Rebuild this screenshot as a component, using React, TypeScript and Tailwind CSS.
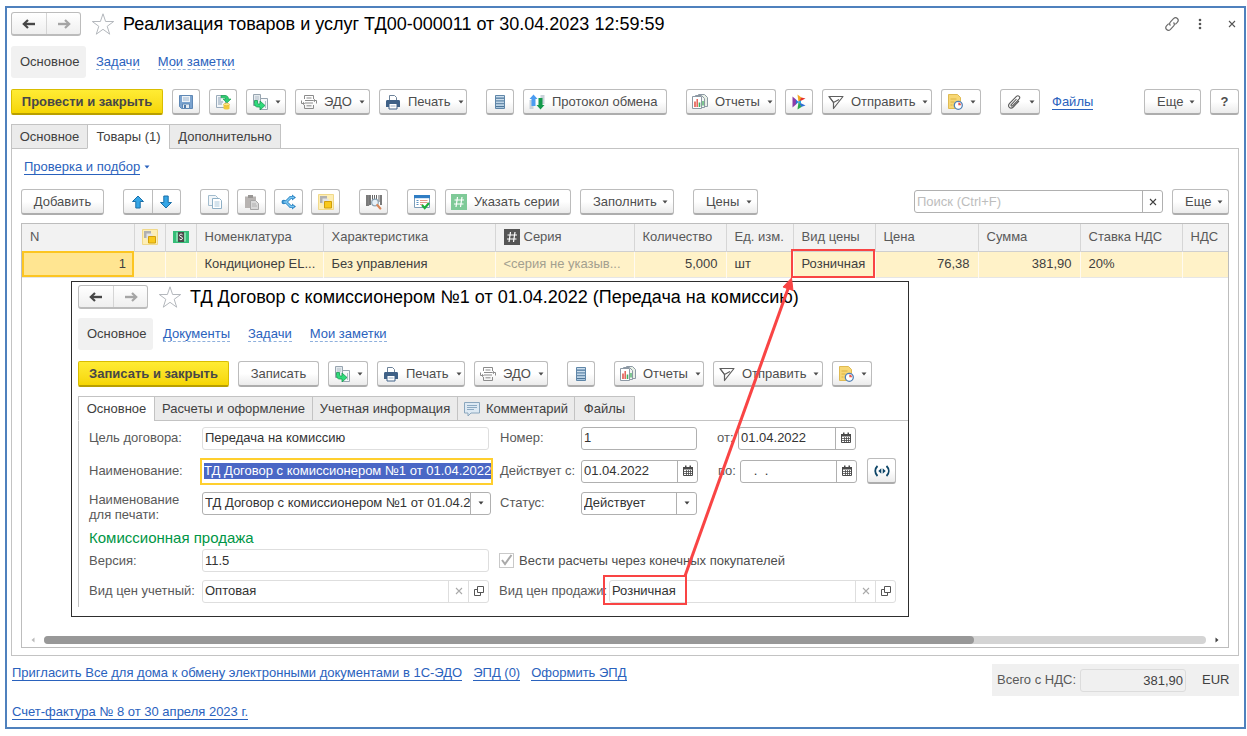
import React from 'react';
import clsx from 'clsx';

type IconProps = { className?: string };

function Svg({ className, children }: { className?: string; children: React.ReactNode }) {
  return (
    <svg viewBox="0 0 16 16" fill="none" className={clsx('w-4 h-4 shrink-0', className)} aria-hidden="true">
      {children}
    </svg>
  );
}

const ArrowIcon = ({ className }: IconProps) => (
  <Svg className={className}>
    <path d="M3.5 8h10.5" stroke="currentColor" strokeWidth="2.4" />
    <path d="M7 4 2.8 8 7 12" stroke="currentColor" strokeWidth="2.2" />
  </Svg>
);

const StarIcon = () => (
  <svg viewBox="0 0 24 24" fill="none" className="w-6 h-6 shrink-0" aria-hidden="true">
    <path
      d="m12 1.8 2.6 7.7h8.1l-6.5 4.8 2.5 7.9-6.7-4.9-6.7 4.9 2.5-7.9L1.3 9.5h8.1z"
      stroke="#b4b8bd"
      strokeWidth="1"
    />
  </svg>
);

const SaveIcon = () => (
  <Svg>
    <path d="M1.5 1.5h13v13h-11l-2-2z" fill="#7ba3cf" stroke="#5f88b5" />
    <path d="M4 2h8v6H4z" fill="#eef3f8" />
    <path d="M5 4h6M5 6h6" stroke="#9db5cf" />
    <path d="M4.500 10h7v4.500h-7z" fill="#e6ecf2" stroke="#5f88b5" />
    <path d="M6 11h2v3H6z" fill="#4f79a8" />
  </Svg>
);

const PostIcon = () => (
  <Svg>
    <path d="M1.5 1.5h9v12h-9z" fill="#f3f6f9" stroke="#9aabbb" />
    <path d="M3 4h3M3 6h3M3 8h5M3 10h4" stroke="#8aa0b5" />
    <path
      d="M6 1.500h4c2.500 0 3.500 1.500 3.500 3.500H16l-4 4-4-4h2.500C10.500 4 10 3.800 9 3.800H6z"
      fill="#2ecc71"
      stroke="#159a4c"
      strokeWidth=".6"
    />
    <path d="M8.500 10.500v4c0 1.300 6 1.300 6 0v-4z" fill="#f3c93c" />
    <ellipse cx="11.5" cy="10.500" rx="3" ry="1.2" fill="#ffe68a" stroke="#d9a91c" strokeWidth=".5" />
  </Svg>
);

const BasedOnIcon = () => (
  <Svg>
    <path d="M1.5.5h7v11h-7z" fill="#e4eaee" stroke="#98a5b0" />
    <path d="M8.500 4.500h7v11h-7z" fill="#f6f8fa" stroke="#98a5b0" />
    <path d="M3 3h4M3 5h4M13.500 7v7" stroke="#b3bec9" />
    <path
      d="M2.500 6.500h3v2.500c0 .6.4 1 1 1H8V7l5 4.500-5 4.500v-3H6c-2.300 0-3.500-1.200-3.500-3.500z"
      fill="#2fdb7b"
      stroke="#169b50"
      strokeWidth=".8"
    />
  </Svg>
);

const EdoIcon = () => (
  <Svg>
    <path d="M3.500 5V1.500h9V5M3.500 11v3.500h9V11M5.500 4h5M4 6.500h8M4 9h8M5.500 11.800h5" stroke="#8b8b8b" />
    <path d="M.5 6.500v3h2M15.500 9.500v-3h-2" stroke="#8b8b8b" />
    <path d="m2 7.800 2 1.700-2 1.700zM14 4.800l-2 1.700 2 1.700z" fill="#8b8b8b" />
  </Svg>
);

const PrinterIcon = () => (
  <Svg>
    <path d="M4.500 6V1.500h5l2 2V6" fill="#fff" stroke="#6d8299" />
    <path d="M1 7.500C1 6.500 1.500 6 2.500 6h11c1 0 1.500.5 1.500 1.500V13H1z" fill="#3f6187" />
    <path d="M4 9.500h8v5.500H4z" fill="#fff" stroke="#3f6187" />
    <path d="M5.500 12h5" stroke="#9db1c6" />
  </Svg>
);

const StackIcon = () => (
  <Svg>
    <path d="M3.500 1.500h9v13h-9z" fill="#a9c6de" stroke="#5f86a8" />
    <path d="M4 4.200h8M4 7h8M4 9.800h8M4 12.500h8" stroke="#4f7698" />
    <path d="M4 2.500h8M4 5.500h8M4 8.200h8M4 11h8" stroke="#d5e5f1" strokeWidth=".8" />
  </Svg>
);

const ExchangeIcon = () => (
  <Svg>
    <path d="M.5 6h4v9h-4zM11.500 1h4v9h-4z" fill="#c9d2da" />
    <path d="M4.500.5 8.500 5h-2v7h-4V5h-2z" fill="#4c9cf0" />
    <path d="M11.500 15.500 7.500 11h2V4h4v7h2z" fill="#159a4c" />
  </Svg>
);

const ReportIcon = () => (
  <Svg>
    <path d="M6.500.5h6l3 3v9h-9z" fill="#e8f0e6" stroke="#8d99a4" />
    <path d="M3.500 1.500h6l3 3v9h-9z" fill="#f3f6f3" stroke="#8d99a4" />
    <path d="M.5 2.500h9v12h-9z" fill="#fff" stroke="#8d99a4" />
    <path d="M3 13V7.500" stroke="#e2574c" strokeWidth="1.600" />
    <path d="M5.200 13V5" stroke="#e2574c" strokeWidth="1.400" />
    <path d="M7.500 13V8.500" stroke="#3fae5d" strokeWidth="1.600" />
    <path d="M11 11.500V7" stroke="#3fae5d" strokeWidth="1.300" />
  </Svg>
);

const BusinessIcon = () => (
  <Svg>
    <path d="m1.500 2.500 3.500 3v5l-3.500 3z" fill="#8a3ea8" />
    <path d="m5 5.500 2.500 2.500L5 10.500z" fill="#2d6fd2" />
    <path d="m6.500.5 4.500 3.500-3.500 4z" fill="#f5a623" />
    <path d="m7.500 8 3-4.500 4 1z" fill="#e5342b" />
    <path d="m7.500 8 7 3.500-4.500 1.500z" fill="#2d6fd2" />
    <path d="m7.500 8 3 5-4 2.500z" fill="#2aa84a" />
    <path d="m6 8 4-1.500v3z" fill="#27a9e0" />
  </Svg>
);

const SendIcon = () => (
  <Svg>
    <path d="M1 2.500h14L5.500 14.500v-6zM5.500 8.500l5.500-3" stroke="#5f5f5f" strokeWidth="1.200" strokeLinejoin="round" />
    <path d="M1 2.500 5.500 8.500" stroke="#5f5f5f" strokeWidth="1.200" />
  </Svg>
);

const NoteIcon = () => (
  <Svg>
    <path d="M1.500.5h9l3 3v11h-12z" fill="#f7d774" stroke="#dfba52" />
    <path d="M3.500 5h6M3.500 8h4M3.500 11h2" stroke="#dcb445" />
    <circle cx="11.300" cy="11.300" r="4" fill="#fff" stroke="#4f7fb5" strokeWidth="1.300" />
    <path d="M11.300 8.500v2.800H14a2.800 2.800 0 0 0-2.700-2.800z" fill="#e5574c" />
  </Svg>
);

const ClipIcon = () => (
  <Svg>
    <path
      d="m10.500 5-5.200 5.600c-.8.9.3 2 1.200 1.200L13 5.200c2-2.200-.7-4.700-2.800-2.600L3.600 9.400c-2.700 3 .8 6.300 3.700 3.600L13 7"
      stroke="#5c5c5c"
      strokeWidth="1.100"
    />
  </Svg>
);

const UpIcon = ({ className }: IconProps) => (
  <Svg className={className}>
    <path d="m8 2 5.500 5.500h-3.300V14H5.800V7.500H2.500z" fill="#35a6e6" stroke="#1b6fa8" strokeLinejoin="round" />
  </Svg>
);

const CopyIcon = () => (
  <Svg>
    <path d="M1.500 1.500h7l2 2v8h-9z" fill="#f2f6f9" stroke="#a3bccd" />
    <path d="M5.500 4.500h7l2 2v8h-9z" fill="#fff" stroke="#8fb0c6" />
    <path d="M7.500 8h5M7.500 10h5M7.500 12h5" stroke="#a9c7da" />
  </Svg>
);

const PasteIcon = () => (
  <Svg>
    <path d="M1 2.500h3V1h5v1.500h3V14H1z" fill="#b8b4b2" />
    <path d="M4 1h5v3H4z" fill="#999694" />
    <path d="M6.500 6.500h5l3 3v6h-8z" fill="#d8d8d8" stroke="#a6a6a6" />
    <path d="M8 10h4M8 12h5" stroke="#b0b0b0" />
  </Svg>
);

const SplitIcon = () => (
  <Svg>
    <path d="M2 8h3M5 8l4.500-4.500H12M5 8l4.500 4.500H12" stroke="#2f86c4" strokeWidth="3" />
    <path d="m11 .5 4 3-4 3zM11 9.500l4 3-4 3z" fill="#2f86c4" />
    <circle cx="2.800" cy="8" r="2.300" fill="#2f86c4" />
    <path d="M2.500 8H5l4.500-4.500H13M5 8l4.500 4.500H13" stroke="#7cc8f2" strokeWidth="1.400" />
  </Svg>
);

const OrderIcon = () => (
  <Svg>
    <path d="M.5.5h15v15H.5z" fill="#fdeeb5" stroke="#f1d98a" />
    <path d="M2 2h7v7H2z" fill="#b0b0b0" />
    <path d="M4.500 4.500h6v6h-6z" fill="#e4e4e4" />
    <path d="M6.500 7.500h7v6.500h-7z" fill="#f9c91c" stroke="#d09f0b" />
  </Svg>
);

const BarcodeIcon = () => (
  <Svg>
    <path d="M1 1v11M4 1v10M15 1v10" stroke="#444" strokeWidth="1.400" />
    <path d="M2.700 1v11M6.500 1v6M8.500 1v5M10.500 1v5M13 1v7" stroke="#666" strokeWidth="1" />
    <circle cx="9" cy="8.500" r="3.300" fill="#e7f1f8" stroke="#8fa5b5" strokeWidth="1.200" />
    <path d="m11.300 11 3 3.500" stroke="#d9885a" strokeWidth="2.200" strokeLinecap="round" />
  </Svg>
);

const CheckListIcon = () => (
  <Svg>
    <path d="M.5 1.500h15v12H.5z" fill="#fff" stroke="#7d9db8" />
    <path d="M0 1h16v3.200H0z" fill="#2f7dc4" />
    <path d="M2.500 6.500h2M2.500 8.500h2M2.500 10.500h2" stroke="#5a90bf" />
    <path d="M6 6.500h7.500M6 8.500h7.500M6 10.500h3" stroke="#e79b8c" />
    <path d="m8 11 2.700 3L15 9" stroke="#1fae3b" strokeWidth="2.200" />
  </Svg>
);

const HashIcon = ({ className }: IconProps) => (
  <Svg className={className}>
    <path d="M0 0h16v16H0z" fill="currentColor" />
    <path d="M6.500 3 5 13M11 3 9.500 13M3.500 6H13M3 10h9.500" stroke="#fff" strokeWidth="1.200" />
  </Svg>
);

const TraceIcon = () => (
  <Svg>
    <path d="M0 2h16v12H0z" fill="#35bd78" />
    <path d="M3 3.500h10v9H3z" fill="#7fdcaa" />
    <path d="M5 3h6v10H5z" fill="#4a4a4a" />
    <path d="M9.500 5.800C9 4.800 6.500 4.800 6.500 6.500s3 1 3 2.700-2.500 1.800-3 .8" stroke="#fff" strokeWidth="1" />
  </Svg>
);

const CommentIcon = () => (
  <Svg>
    <path d="M.5 1.500h15V12H7l-3 3v-3H.5z" fill="#dde9f3" stroke="#8aa6bd" />
    <path d="M3 4.500h10M3 6.500h10M3 8.500h7" stroke="#8ba9c2" />
  </Svg>
);

const CalendarIcon = () => (
  <svg viewBox="0 0 12 12" fill="none" className="w-3 h-3" aria-hidden="true">
    <path d="M1.500 2.500h9v8h-9z" fill="#fff" stroke="#4a4a4a" />
    <path d="M1 2h10v2.500H1zM3 .5h1.500V3H3zM7.500.5H9V3H7.500z" fill="#4a4a4a" />
    <path d="M2 6.500h8M2 8.500h8M4.500 5v5.500M6.500 5v5.500M8.500 5v5.500" stroke="#4a4a4a" strokeWidth=".8" />
  </svg>
);

const OpenIcon = () => (
  <svg viewBox="0 0 12 12" fill="none" className="w-3 h-3" aria-hidden="true">
    <path d="M4.500 1.500h6v6h-6z" stroke="#555" />
    <path d="M4.500 4.500h-3v6h6v-3" stroke="#555" />
  </svg>
);

const CrossIcon = ({ className }: IconProps) => (
  <svg viewBox="0 0 8 8" fill="none" className={clsx('w-2 h-2', className)} aria-hidden="true">
    <path d="m1 1 6 6M7 1 1 7" stroke="currentColor" strokeWidth="1.100" />
  </svg>
);

const LinkIcon = () => (
  <Svg>
    <path
      d="M6.500 9.500c-1.300-1.300-1-2.700 0-3.700l3-3.100c2.700-2.700 6.300.9 3.800 3.600l-2 2M9.500 6.500c1.300 1.300 1 2.700 0 3.700l-3 3.100c-2.700 2.700-6.300-.9-3.800-3.600l2-2"
      stroke="#6a6a6a"
      strokeWidth="1.200"
    />
  </Svg>
);

const PeriodIcon = () => (
  <Svg>
    <path d="M3.500 3c-3 3-3 7 0 10M12.500 3c3 3 3 7 0 10" stroke="#0d4567" strokeWidth="1.800" />
    <path d="M7.300 5.300v5.400L4.300 8zM8.700 5.300v5.400l3-2.700z" fill="#0d4567" />
  </Svg>
);

const Caret = ({ className }: IconProps) => (
  <svg viewBox="0 0 6 4" className={clsx('w-[6px] h-1 shrink-0', className)} aria-hidden="true">
    <path d="M.5.5h5L3 3.500z" fill="currentColor" />
  </svg>
);

const buttonBase =
  'h-[26px] rounded-[3px] border border-b-2 border-[#bcbcbc] border-b-[#adadad] bg-linear-to-b from-white via-white to-[#ebebeb] text-[#4d4d4d] whitespace-nowrap';

interface ToolButtonProps {
  width: string;
  icon?: React.ReactNode;
  text?: string;
  label?: string;
  caret?: boolean;
  disabled?: boolean;
}

function ToolButton({ width, icon, text, label, caret, disabled }: ToolButtonProps) {
  const centered = !caret && !(icon && text);
  return (
    <button
      type="button"
      aria-label={label}
      disabled={disabled}
      className={clsx(
        buttonBase,
        'flex items-center shrink-0',
        width,
        centered && 'justify-center',
        !centered && (icon ? 'pl-[5px] pr-[5px] gap-[7px]' : 'pl-3 pr-[5px]')
      )}
    >
      {icon}
      {text && <span>{text}</span>}
      {caret && <Caret className="ml-auto" />}
    </button>
  );
}

function PrimaryButton({ text, width }: { text: string; width: string }) {
  return (
    <button
      type="button"
      className={clsx(
        'h-[26px] shrink-0 rounded-[2px] border border-b-2 border-[#d9bd00] border-b-[#b99f00] bg-linear-to-b from-[#ffec33] to-[#f6d600] font-bold text-[#474747] whitespace-nowrap',
        width
      )}
    >
      {text}
    </button>
  );
}

function WindowHeader({ title, children }: { title: string; children?: React.ReactNode }) {
  return (
    <div className="flex items-center h-6">
      <div className="flex h-6 rounded-[3px] border border-b-2 border-[#bcbcbc] bg-linear-to-b from-white to-[#efefef]">
        <button type="button" aria-label="Назад" className="w-[34px] flex items-center justify-center text-[#474747]">
          <ArrowIcon />
        </button>
        <button
          type="button"
          aria-label="Вперед"
          className="w-[34px] flex items-center justify-center border-l border-[#d5d5d5] text-[#a5a5a5]"
        >
          <ArrowIcon className="rotate-180" />
        </button>
      </div>
      <button type="button" aria-label="В избранное" className="ml-[10px] mr-2">
        <StarIcon />
      </button>
      <h1 className="text-[18px] leading-6 text-black whitespace-nowrap">{title}</h1>
      {children}
    </div>
  );
}

function SectionNav({ links }: { links: string[] }) {
  return (
    <nav className="flex items-center h-8">
      <a href="#main" className="h-8 w-[75px] pl-[9px] flex items-center rounded-[3px] bg-[#f1f1f1]">
        Основное
      </a>
      {links.map((link, i) => (
        <a
          key={link}
          href="#section"
          className={clsx(
            'leading-[14px] border-b border-dashed border-[#8fb0dd] text-[#2a62bd]',
            i === 0 ? 'ml-[10px]' : 'ml-[18px]'
          )}
        >
          {link}
        </a>
      ))}
    </nav>
  );
}

interface TabItem {
  text: string;
  width: string;
  icon?: React.ReactNode;
}

function Tabs({ items, active }: { items: TabItem[]; active: string }) {
  return (
    <div role="tablist" className="flex h-[25px] -mb-px relative">
      {items.map((item, i) => (
        <button
          key={item.text}
          type="button"
          role="tab"
          aria-selected={item.text === active}
          className={clsx(
            'flex items-center justify-center gap-[6px] border border-[#c3c3c3] whitespace-nowrap',
            item.width,
            i > 0 && '-ml-px',
            item.text === active ? 'bg-white border-b-white' : 'bg-[#ebebeb]'
          )}
        >
          {item.icon}
          {item.text}
        </button>
      ))}
    </div>
  );
}

interface FieldProps {
  id: string;
  value: string;
  width: string;
  muted?: boolean;
  buttons?: { label: string; icon: React.ReactNode }[];
}

function Field({ id, value, width, muted, buttons = [] }: FieldProps) {
  const border = muted ? 'border-[#dedede]' : 'border-[#b0b0b0]';
  return (
    <div className={clsx('flex h-[23px] shrink-0 rounded-[3px] border bg-white', border, width)}>
      <input id={id} defaultValue={value} className="flex-1 min-w-0 pl-[2px] text-[#333] outline-none" />
      {buttons.map((b) => (
        <button
          key={b.label}
          type="button"
          aria-label={b.label}
          className={clsx('w-5 flex items-center justify-center border-l', border)}
        >
          {b.icon}
        </button>
      ))}
    </div>
  );
}

function Label({ htmlFor, width, children }: { htmlFor: string; width: string; children: React.ReactNode }) {
  return (
    <label htmlFor={htmlFor} className={clsx('shrink-0 text-[#595959] whitespace-nowrap', width)}>
      {children}
    </label>
  );
}

const calendarButton = { label: 'Выбрать дату', icon: <CalendarIcon /> };
const listButton = { label: 'Выбрать из списка', icon: <Caret /> };
const clearButton = { label: 'Очистить', icon: <CrossIcon className="text-[#aaa]" /> };
const openButton = { label: 'Открыть', icon: <OpenIcon /> };

function ContractForm() {
  return (
    <form className="pl-[10px] border-l border-[#c3c3c3]">
      <div className="flex items-center h-[34px]">
        <Label htmlFor="purpose" width="w-[113px]">Цель договора:</Label>
        <Field id="purpose" value="Передача на комиссию" width="w-[287px]" muted />
        <Label htmlFor="number" width="w-[92px] pl-[11px]">Номер:</Label>
        <Field id="number" value="1" width="w-[116px]" />
        <Label htmlFor="date" width="w-[41px] pl-5">от:</Label>
        <Field id="date" value="01.04.2022" width="w-[118px]" buttons={[calendarButton]} />
      </div>
      <div className="flex items-center h-8">
        <Label htmlFor="name" width="w-[111px]">Наименование:</Label>
        <div className="w-[293px] h-[27px] shrink-0 border-2 border-[#ffcf2e] flex items-center pl-[2px]">
          <input
            id="name"
            defaultValue="ТД Договор с комиссионером №1 от 01.04.2022"
            className="w-full h-4 bg-[#4a67c5] text-white outline-none"
          />
        </div>
        <Label htmlFor="validFrom" width="w-[88px] pl-[7px]">Действует с:</Label>
        <Field id="validFrom" value="01.04.2022" width="w-[117px]" buttons={[calendarButton]} />
        <Label htmlFor="validTo" width="w-[42px] pl-5">по:</Label>
        <Field id="validTo" value="   .  ." width="w-[117px]" buttons={[calendarButton]} />
        <button
          type="button"
          aria-label="Изменить период"
          className={clsx(buttonBase, 'ml-[10px] w-[29px] flex items-center justify-center')}
        >
          <PeriodIcon />
        </button>
      </div>
      <div className="flex items-center h-8">
        <Label htmlFor="printName" width="w-[113px] leading-[15px] pt-2">
          Наименование
          <br />
          для печати:
        </Label>
        <Field
          id="printName"
          value="ТД Договор с комиссионером №1 от 01.04.2022"
          width="w-[289px]"
          buttons={[listButton]}
        />
        <Label htmlFor="status" width="w-[90px] pl-[9px]">Статус:</Label>
        <div className="relative w-[116px]">
          <select
            id="status"
            defaultValue="Действует"
            className="w-full h-[23px] px-[2px] appearance-none rounded-[3px] border border-[#b0b0b0] bg-white text-[#333] outline-none"
          >
            <option>Действует</option>
            <option>Закрыт</option>
          </select>
          <span className="absolute right-0 inset-y-0 w-[21px] flex items-center justify-center border-l border-[#b0b0b0] pointer-events-none">
            <Caret />
          </span>
        </div>
      </div>
      <h2 className="h-[27px] flex items-end leading-4 text-[15px] text-[#009646]">Комиссионная продажа</h2>
      <div className="flex items-center h-[29px]">
        <Label htmlFor="version" width="w-[113px]">Версия:</Label>
        <Field id="version" value="11.5" width="w-[287px]" muted />
        <label className="relative flex items-center ml-[10px] gap-[5px] text-[#4d4d4d]">
          <input
            type="checkbox"
            defaultChecked
            className="peer appearance-none w-[15px] h-[15px] border border-[#c9c9c9] bg-white"
          />
          <svg
            viewBox="0 0 15 15"
            fill="none"
            className="absolute left-0 w-[15px] h-[15px] hidden peer-checked:block"
            aria-hidden="true"
          >
            <path d="m3 7 3 4 6.500-9" stroke="#a9a9a9" strokeWidth="2" />
          </svg>
          Вести расчеты через конечных покупателей
        </label>
      </div>
      <div className="flex items-center h-8">
        <Label htmlFor="accountPrice" width="w-[113px]">Вид цен учетный:</Label>
        <Field
          id="accountPrice"
          value="Оптовая"
          width="w-[287px]"
          muted
          buttons={[clearButton, openButton]}
        />
        <Label htmlFor="salePrice" width="w-[120px] pl-[10px]">Вид цен продажи:</Label>
        <Field
          id="salePrice"
          value="Розничная"
          width="w-[287px]"
          muted
          buttons={[clearButton, openButton]}
        />
      </div>
    </form>
  );
}

function ContractWindow() {
  return (
    <section className="absolute left-[49px] top-[57px] w-[838px] pl-[6px] pt-[3px] pb-[9px] border border-[#2e2e2e] bg-white">
      <WindowHeader title="ТД Договор с комиссионером №1 от 01.04.2022 (Передача на комиссию)" />
      <div className="mt-[9px]">
        <SectionNav links={['Документы', 'Задачи', 'Мои заметки']} />
      </div>
      <div className="flex gap-[19px] mt-[11px]">
        <div className="flex gap-[9px]">
          <PrimaryButton text="Записать и закрыть" width="w-[151px]" />
          <ToolButton width="w-[81px]" text="Записать" />
          <ToolButton width="w-10" icon={<BasedOnIcon />} label="Создать на основании" caret />
          <ToolButton width="w-[88px]" icon={<PrinterIcon />} text="Печать" caret />
          <ToolButton width="w-[74px]" icon={<EdoIcon />} text="ЭДО" caret />
        </div>
        <ToolButton width="w-7" icon={<StackIcon />} label="Реестр" />
        <div className="flex gap-[9px]">
          <ToolButton width="w-[90px]" icon={<ReportIcon />} text="Отчеты" caret />
          <ToolButton width="w-[110px]" icon={<SendIcon />} text="Отправить" caret />
          <ToolButton width="w-10" icon={<NoteIcon />} label="Напоминания" caret />
        </div>
      </div>
      <div className="mt-[9px]">
        <Tabs
          active="Основное"
          items={[
            { text: 'Основное', width: 'w-[77px]' },
            { text: 'Расчеты и оформление', width: 'w-[159px]' },
            { text: 'Учетная информация', width: 'w-[146px]' },
            { text: 'Комментарий', width: 'w-[118px]', icon: <CommentIcon /> },
            { text: 'Файлы', width: 'w-[61px]' },
          ]}
        />
      </div>
      <div className="border-t border-[#c3c3c3]">
        <ContractForm />
      </div>
    </section>
  );
}

const columns: { title: React.ReactNode; key: string; width: string }[] = [
  { key: 'n', title: 'N', width: 'w-[112px]' },
  { key: 'order', title: <OrderIcon />, width: 'w-[31px]' },
  { key: 'trace', title: <TraceIcon />, width: 'w-[31px]' },
  { key: 'item', title: 'Номенклатура', width: 'w-[127px]' },
  { key: 'kind', title: 'Характеристика', width: 'w-[172px]' },
  {
    key: 'series',
    title: (
      <span className="flex items-center gap-1">
        <HashIcon className="text-[#555]" />
        Серия
      </span>
    ),
    width: 'w-[139px]',
  },
  { key: 'qty', title: 'Количество', width: 'w-[92px]' },
  { key: 'unit', title: 'Ед. изм.', width: 'w-[67px]' },
  { key: 'priceKind', title: 'Вид цены', width: 'w-[82px]' },
  { key: 'price', title: 'Цена', width: 'w-[103px]' },
  { key: 'sum', title: 'Сумма', width: 'w-[102px]' },
  { key: 'vatRate', title: 'Ставка НДС', width: 'w-[102px]' },
  { key: 'vat', title: 'НДС', width: '' },
];

function GoodsTable() {
  const cell = 'pl-2 pr-1 border-r border-[#fffaf0] whitespace-nowrap';
  const numberCell = 'pl-1 pr-2 border-r border-[#fffaf0] whitespace-nowrap text-right';
  return (
    <table className="w-full table-fixed text-left">
      <thead>
        <tr className="h-[27px] bg-[#f2f2f2] border-b border-[#cfcfcf]">
          {columns.map((c) => (
            <th
              key={c.key}
              scope="col"
              className={clsx(
                'font-normal text-[#595959] border-r border-[#d6d6d6] last:border-r-0 whitespace-nowrap',
                c.width,
                c.key === 'order' || c.key === 'trace' ? 'px-[7px]' : 'px-2'
              )}
            >
              {c.title}
            </th>
          ))}
        </tr>
      </thead>
      <tbody>
        <tr className="h-[26px] bg-[#fff2c8] border-b border-[#e6e6e6] text-[#404040]">
          <td className="px-2 text-right bg-[#ffe591] outline-2 -outline-offset-2 outline-[#fcc521]">1</td>
          <td className={cell} />
          <td className={cell} />
          <td className={cell}>Кондиционер EL...</td>
          <td className={cell}>Без управления</td>
          <td className={clsx(cell, 'text-[#a3a08f]')}>&lt;серия не указыв...</td>
          <td className={numberCell}>5,000</td>
          <td className={cell}>шт</td>
          <td className={cell}>Розничная</td>
          <td className={numberCell}>76,38</td>
          <td className={numberCell}>381,90</td>
          <td className={cell}>20%</td>
          <td />
        </tr>
      </tbody>
    </table>
  );
}

// Red frames and the arrow that ties the two price kinds together
function Callout() {
  return (
    <svg
      viewBox="0 0 900 400"
      fill="none"
      stroke="#f94444"
      className="absolute left-0 top-0 w-[900px] h-[400px] pointer-events-none"
      aria-hidden="true"
    >
      <path d="M770 26h82v27h-82zM582 352h82v28h-82z" strokeWidth="2" />
      <path d="m663 352 104-290" strokeWidth="3" />
      <path d="m769.500 54-8.500 9 10 3.500z" fill="#f94444" strokeWidth="1" />
    </svg>
  );
}

function GoodsPanel() {
  return (
    <div className="flex-1 flex flex-col px-[9px] pb-[7px] border border-[#c3c3c3]">
      <div className="h-9 mb-1 pl-[3px] flex items-center gap-1 text-[#2a62bd]">
        <a href="#selection" className="leading-[14px] border-b border-[#2a62bd]">
          Проверка и подбор
        </a>
        <Caret />
      </div>
      <div className="flex gap-[19px]">
        <ToolButton width="w-[83px]" text="Добавить" />
        <div className={clsx(buttonBase, 'flex w-[58px]')}>
          <button type="button" aria-label="Переместить вверх" className="flex-1 flex items-center justify-center">
            <UpIcon />
          </button>
          <button
            type="button"
            aria-label="Переместить вниз"
            className="flex-1 flex items-center justify-center border-l border-[#bcbcbc]"
          >
            <UpIcon className="rotate-180" />
          </button>
        </div>
        <div className="flex gap-2">
          <ToolButton width="w-[29px]" icon={<CopyIcon />} label="Копировать" />
          <ToolButton width="w-[29px]" icon={<PasteIcon />} label="Вставить" disabled />
          <ToolButton width="w-[29px]" icon={<SplitIcon />} label="Разбить строку" />
          <ToolButton width="w-[29px]" icon={<OrderIcon />} label="Заказ" />
        </div>
        <ToolButton width="w-[29px]" icon={<BarcodeIcon />} label="Поиск по штрихкоду" />
        <div className="flex gap-[9px]">
          <ToolButton width="w-[29px]" icon={<CheckListIcon />} label="Проверить" />
          <ToolButton width="w-[126px]" icon={<HashIcon className="text-[#7fca98]" />} text="Указать серии" />
          <ToolButton width="w-[94px]" text="Заполнить" caret />
        </div>
        <ToolButton width="w-[65px]" text="Цены" caret />
        <div className="flex gap-[9px] ml-auto">
          <div className="flex w-[249px] h-[23px] mt-px rounded-[3px] border border-[#b0b0b0]">
            <input
              aria-label="Поиск"
              placeholder="Поиск (Ctrl+F)"
              className="flex-1 min-w-0 px-[2px] outline-none placeholder:text-[#bdbdbd]"
            />
            <button
              type="button"
              aria-label="Очистить поиск"
              className="w-5 flex items-center justify-center border-l border-[#b0b0b0]"
            >
              <CrossIcon />
            </button>
          </div>
          <ToolButton width="w-[57px]" text="Еще" caret />
        </div>
      </div>
      <div className="relative flex-1 flex flex-col justify-between min-h-[425px] mt-2 border border-[#bdbdbd]">
        <GoodsTable />
        <div className="flex items-center h-[15px] gap-2 px-2">
          <Caret className="rotate-90 text-[#bbb]" />
          <div className="flex-1 h-2 rounded-full bg-[#d4d4d4]">
            <div className="w-4/5 h-2 rounded-full bg-[#989898]" />
          </div>
          <Caret className="-rotate-90" />
        </div>
        <ContractWindow />
        <Callout />
      </div>
    </div>
  );
}

function Footer() {
  const link = 'leading-[14px] border-b border-[#2a62bd] text-[#2a62bd]';
  return (
    <footer className="flex items-start justify-between pt-2 pb-[7px]">
      <div className="pl-px">
        <div className="flex items-center gap-[11px] h-[18px]">
          <a href="#invite" className={link}>
            Пригласить Все для дома к обмену электронными документами в 1С-ЭДО
          </a>
          <a href="#epd" className={link}>ЭПД (0)</a>
          <a href="#new-epd" className={link}>Оформить ЭПД</a>
        </div>
        <div className="flex items-center h-4 mt-[22px]">
          <a href="#invoice" className={link}>Счет-фактура № 8 от 30 апреля 2023 г.</a>
        </div>
      </div>
      <div className="flex items-center h-8 px-[5px] bg-[#f0f0f0]">
        <label htmlFor="total" className="w-[83px] text-[#595959] whitespace-nowrap">Всего с НДС:</label>
        <input
          id="total"
          readOnly
          value="381,90"
          className="w-[106px] h-[23px] px-[2px] text-right rounded-[3px] border border-[#dcdcdc] text-[#404040] outline-none"
        />
        <span className="w-12 pl-4 text-[#404040]">EUR</span>
      </div>
    </footer>
  );
}

export default function App() {
  return (
    <div className="min-h-screen min-w-[1247px] flex flex-col pl-[5px] pr-px pt-[6px] pb-[7px] bg-white font-['Liberation_Sans',Arial,sans-serif] text-[13px] leading-4 text-[#404040]">
      <main className="flex-1 flex flex-col pl-1 pr-[5px] pt-1 border-2 border-[#4f81bd]">
        <WindowHeader title="Реализация товаров и услуг ТД00-000011 от 30.04.2023 12:59:59">
          <div className="flex items-center gap-3 ml-auto pr-[3px] text-[#555]">
            <button type="button" aria-label="Получить ссылку">
              <LinkIcon />
            </button>
            <button type="button" aria-label="Меню" className="w-4 flex justify-center">
              <svg viewBox="0 0 4 12" className="w-1 h-3" fill="currentColor" aria-hidden="true">
                <circle cx="2" cy="2" r="1.300" />
                <circle cx="2" cy="6" r="1.300" />
                <circle cx="2" cy="10" r="1.300" />
              </svg>
            </button>
            <button type="button" aria-label="Закрыть" className="w-4 flex justify-end">
              <CrossIcon />
            </button>
          </div>
        </WindowHeader>
        <div className="mt-[10px]">
          <SectionNav links={['Задачи', 'Мои заметки']} />
        </div>
        <div className="flex gap-[19px] mt-[11px]">
          <div className="flex gap-[9px]">
            <PrimaryButton text="Провести и закрыть" width="w-[152px]" />
            <ToolButton width="w-7" icon={<SaveIcon />} label="Записать" />
            <ToolButton width="w-7" icon={<PostIcon />} label="Провести" />
            <ToolButton width="w-10" icon={<BasedOnIcon />} label="Создать на основании" caret />
            <ToolButton width="w-[75px]" icon={<EdoIcon />} text="ЭДО" caret />
            <ToolButton width="w-[88px]" icon={<PrinterIcon />} text="Печать" caret />
          </div>
          <div className="flex gap-[9px]">
            <ToolButton width="w-7" icon={<StackIcon />} label="Реестр" />
            <ToolButton width="w-36" icon={<ExchangeIcon />} text="Протокол обмена" />
          </div>
          <div className="flex gap-[9px]">
            <ToolButton width="w-[90px]" icon={<ReportIcon />} text="Отчеты" caret />
            <ToolButton width="w-7" icon={<BusinessIcon />} label="Бизнес-сеть" />
            <ToolButton width="w-[110px]" icon={<SendIcon />} text="Отправить" caret />
            <ToolButton width="w-10" icon={<NoteIcon />} label="Напоминания" caret />
          </div>
          <div className="flex items-center gap-3">
            <ToolButton width="w-10" icon={<ClipIcon />} label="Присоединить" caret />
            <a href="#files" className="leading-[14px] border-b border-[#2a62bd] text-[#2a62bd]">
              Файлы
            </a>
          </div>
          <div className="flex gap-[9px] ml-auto">
            <ToolButton width="w-[57px]" text="Еще" caret />
            <button type="button" className={clsx(buttonBase, 'w-[29px] font-bold')}>
              ?
            </button>
          </div>
        </div>
        <div className="mt-[9px]">
          <Tabs
            active="Товары (1)"
            items={[
              { text: 'Основное', width: 'w-[77px]' },
              { text: 'Товары (1)', width: 'w-[83px]' },
              { text: 'Дополнительно', width: 'w-[112px]' },
            ]}
          />
        </div>
        <GoodsPanel />
        <Footer />
      </main>
    </div>
  );
}
